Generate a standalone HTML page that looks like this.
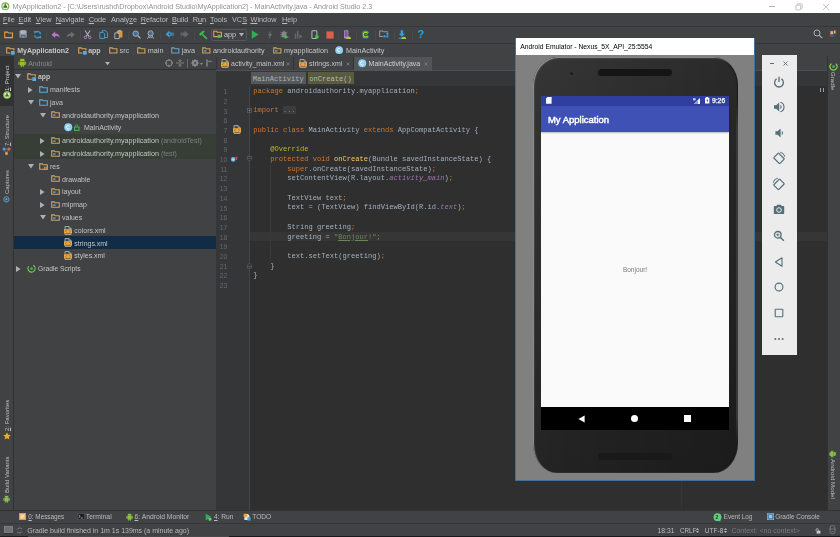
<!DOCTYPE html>
<html><head><meta charset="utf-8"><title>Android Studio</title>
<style>
*{box-sizing:border-box;margin:0;padding:0}
html,body{width:840px;height:537px;overflow:hidden}
body{position:relative;background:#404244;font-family:"Liberation Sans",sans-serif;font-size:7.2px;color:#bbbbbb;line-height:1}
.a{position:absolute}
.t{position:absolute;white-space:pre;line-height:10px;height:10px;filter:blur(.3px)}
svg{filter:blur(.25px);overflow:visible}
u{text-decoration:underline;text-underline-offset:0.5px;text-decoration-thickness:.6px}
.code{font-family:"Liberation Mono",monospace;font-size:7.09px;color:#a3b1c0}
.k{color:#cc7832}.s{color:#6a8759}.an{color:#bbb529}.m{color:#ffc66d}.f{color:#9876aa}.ln{color:#606366}
</style></head><body>
<div class="a" style="left:0px;top:0px;width:840px;height:13px;background:#fff;"></div>
<div class="a" style="left:0px;top:13px;width:840px;height:13px;background:#404244;"></div>
<div class="a" style="left:0px;top:26px;width:840px;height:17px;background:#404244;border-top:1px solid #35383a"></div>
<div class="a" style="left:0px;top:43px;width:840px;height:13px;background:#404244;border-top:1px solid #35383a"></div>
<div class="a" style="left:0px;top:56px;width:13.5px;height:454px;background:#404244;border-right:1px solid #2f3133"></div>
<div class="a" style="left:13.5px;top:56px;width:202.5px;height:454px;background:#404244;"></div>
<div class="a" style="left:216px;top:56px;width:610.5px;height:454px;background:#2f2f2f;"></div>
<div class="a" style="left:826.5px;top:56px;width:13.5px;height:454px;background:#404244;border-left:1px solid #2f3133"></div>
<div class="a" style="left:0px;top:509.7px;width:840px;height:14px;background:#404244;border-top:1px solid #2f3133"></div>
<div class="a" style="left:0px;top:523.4px;width:840px;height:13.6px;background:#404244;border-top:1px solid #35383a"></div>
<svg class="a" style="left:1.30px;top:1.90px" width="8.60" height="8.60" viewBox="0 0 10 10"><circle cx="5" cy="5" r="4.6" fill="#7cb342"/><circle cx="5" cy="5" r="3.3" fill="#e8f0e0"/><path d="M2.6 6.6a2.4 2.4 0 0 1 4.8 0z" fill="#3d6b28"/><path d="M4.6 1.8h.8L6 4.6H4z" fill="#3d6b28"/></svg>
<div class="t" style="left:12.5px;top:1.5px;font-size:7.18px;color:#929292;">MyApplication2 - [C:\Users\rushd\Dropbox\Android Studio\MyApplication2] - MainActivity.java - Android Studio 2.3</div>
<div class="a" style="left:768.5px;top:6px;width:6px;height:0.9px;background:#b4b4b4;"></div>
<svg class="a" style="left:794.50px;top:3.00px" width="8" height="8" viewBox="0 0 8 8"><g fill="none" stroke="#b4b4b4" stroke-width=".8"><rect x=".9" y="2.1" width="4.8" height="4.8" rx=".6"/><path d="M2.3 2V1.3a.5.5 0 0 1 .5-.5H6.6a.5.5 0 0 1 .5.5V5a.5.5 0 0 1-.5.5H5.9"/></g></svg>
<svg class="a" style="left:822.00px;top:2.60px" width="8" height="8" viewBox="0 0 8 8"><path d="M1 .9l6 6M7 .9L1 6.9" stroke="#b4b4b4" stroke-width=".8"/></svg>
<div class="t" style="left:3px;top:14.7px;font-size:7.3px;color:#bcbcbc;"><u>F</u>ile</div>
<div class="t" style="left:18.5px;top:14.7px;font-size:7.3px;color:#bcbcbc;"><u>E</u>dit</div>
<div class="t" style="left:35.8px;top:14.7px;font-size:7.3px;color:#bcbcbc;"><u>V</u>iew</div>
<div class="t" style="left:55.8px;top:14.7px;font-size:7.3px;color:#bcbcbc;"><u>N</u>avigate</div>
<div class="t" style="left:88.7px;top:14.7px;font-size:7.3px;color:#bcbcbc;"><u>C</u>ode</div>
<div class="t" style="left:111px;top:14.7px;font-size:7.3px;color:#bcbcbc;">Analy<u>z</u>e</div>
<div class="t" style="left:140.7px;top:14.7px;font-size:7.3px;color:#bcbcbc;"><u>R</u>efactor</div>
<div class="t" style="left:172px;top:14.7px;font-size:7.3px;color:#bcbcbc;"><u>B</u>uild</div>
<div class="t" style="left:192.7px;top:14.7px;font-size:7.3px;color:#bcbcbc;">R<u>u</u>n</div>
<div class="t" style="left:210px;top:14.7px;font-size:7.3px;color:#bcbcbc;"><u>T</u>ools</div>
<div class="t" style="left:232px;top:14.7px;font-size:7.3px;color:#bcbcbc;">VC<u>S</u></div>
<div class="t" style="left:250.5px;top:14.7px;font-size:7.3px;color:#bcbcbc;"><u>W</u>indow</div>
<div class="t" style="left:282px;top:14.7px;font-size:7.3px;color:#bcbcbc;"><u>H</u>elp</div>
<svg class="a" style="left:3.90px;top:30.82px" width="9.20" height="7.36" viewBox="0 0 10 8"><path d="M.8 1.2h3.2l.8 1h4.4v5H.8z" fill="none" stroke="#e0a24c" stroke-width="1.2"/></svg>
<svg class="a" style="left:18.86px;top:30.36px" width="8.28" height="8.28" viewBox="0 0 9 9"><rect x=".5" y=".5" width="8" height="8" rx=".8" fill="#8f959a"/><rect x="2" y=".5" width="5" height="3.2" fill="#d4d7d9"/><path d="M2.6 1.5h3.8M2.6 2.6h3.8" stroke="#777c80" stroke-width=".5"/><rect x="2" y="5.4" width="5" height="3.1" fill="#5b6064"/><rect x="3" y="6.4" width="3" height="2.1" fill="#4f9fe0"/></svg>
<svg class="a" style="left:32.90px;top:29.90px" width="9.20" height="9.20" viewBox="0 0 10 10"><g fill="none" stroke="#3e9ad6" stroke-width="1.5"><path d="M8.3 4.2A3.4 3.4 0 0 0 2.6 2.6"/><path d="M1.7 5.8A3.4 3.4 0 0 0 7.4 7.4"/></g><path d="M1 1l3.2.4L1.6 4.2z M9 9L5.8 8.6 8.4 5.8z" fill="#3e9ad6"/></svg>
<div class="a" style="left:46px;top:30.5px;width:1px;height:9px;background:#484b4d;"></div>
<svg class="a" style="left:51.40px;top:30.82px" width="9.20" height="7.36" viewBox="0 0 10 8"><path d="M.5 4.2L4.6.6v2.1c3 0 4.6 1.6 4.9 4.6C8.3 5.8 6.8 5.4 4.6 5.5v2.2z" fill="#bb72d4"/></svg>
<svg class="a" style="left:66.40px;top:30.82px" width="9.20" height="7.36" viewBox="0 0 10 8"><path d="M9.5 4.2L5.4.6v2.1c-3 0-4.6 1.6-4.9 4.6C1.7 5.8 3.2 5.4 5.4 5.5v2.2z" fill="#6b6e70"/></svg>
<div class="a" style="left:80px;top:30.5px;width:1px;height:9px;background:#484b4d;"></div>
<svg class="a" style="left:83.40px;top:29.90px" width="9.20" height="9.20" viewBox="0 0 10 10"><path d="M2.2.6L6.6 7M7.8.6L3.4 7" stroke="#b4b8bb" stroke-width="1.1" fill="none"/><circle cx="2.6" cy="8" r="1.4" fill="none" stroke="#b77fd0" stroke-width="1"/><circle cx="7.4" cy="8" r="1.4" fill="none" stroke="#b77fd0" stroke-width="1"/></svg>
<svg class="a" style="left:99.40px;top:29.90px" width="9.20" height="9.20" viewBox="0 0 10 10"><path d="M3.6.8h3.6l2 2v5.4H3.6z" fill="#404244" stroke="#4a9fd8" stroke-width="1"/><path d="M.9 2.6h3.6l1.6 1.6v5H.9z" fill="#404244" stroke="#4a9fd8" stroke-width="1"/></svg>
<svg class="a" style="left:114.40px;top:29.90px" width="9.20" height="9.20" viewBox="0 0 10 10"><rect x="3" y=".8" width="6.2" height="7.4" fill="#d9973f"/><rect x="4.6" y=".2" width="3" height="1.6" fill="#b4b8bb"/><path d="M.9 3.2h3.4l1.4 1.4v4.8H.9z" fill="#404244" stroke="#b4b8bb" stroke-width="1"/></svg>
<div class="a" style="left:127.5px;top:30.5px;width:1px;height:9px;background:#484b4d;"></div>
<svg class="a" style="left:132.40px;top:29.90px" width="9.20" height="9.20" viewBox="0 0 10 10"><circle cx="4" cy="4" r="2.9" fill="#3f6f96" stroke="#aeb3b7" stroke-width="1"/><path d="M6.3 6.3L9.2 9.2" stroke="#aeb3b7" stroke-width="1.3"/></svg>
<svg class="a" style="left:146.40px;top:29.90px" width="9.20" height="9.20" viewBox="0 0 10 10"><circle cx="5" cy="3.6" r="2.8" fill="#3f6f96" stroke="#aeb3b7" stroke-width="1"/><path d="M3.6 6L1.6 9.4M6.4 6L8.4 9.4M3 8h4" stroke="#aeb3b7" stroke-width="1" fill="none"/></svg>
<div class="a" style="left:160px;top:30.5px;width:1px;height:9px;background:#484b4d;"></div>
<svg class="a" style="left:165.40px;top:30.36px" width="9.20" height="8.28" viewBox="0 0 10 9"><path d="M.6 4.5L5 .6v2.2h2.4v3.4H5v2.2z" fill="#3e9ad6"/><rect x="8" y="2.8" width="1.3" height="3.4" fill="#3e9ad6"/><circle cx="5" cy="4.5" r="1" fill="#404244"/></svg>
<svg class="a" style="left:180.40px;top:30.36px" width="9.20" height="8.28" viewBox="0 0 10 9"><path d="M9.4 4.5L5 .6v2.2H2.6v3.4H5v2.2z" fill="#66696b"/><rect x=".7" y="2.8" width="1.3" height="3.4" fill="#66696b"/></svg>
<div class="a" style="left:193.5px;top:30.5px;width:1px;height:9px;background:#484b4d;"></div>
<svg class="a" style="left:198.11px;top:29.60px" width="10.78" height="9.80" viewBox="0 0 11 10"><path d="M1 4.2L5.2.6l2 1.2L4.8 3.6 9.8 8.4 8.6 9.6 3.6 4.8 2.2 5.8z" fill="#3fb54f"/></svg>
<div class="a" style="left:211px;top:29px;width:35.5px;height:11.5px;background:#404244;border:1px solid #54575a;border-radius:1.5px"></div>
<svg class="a" style="left:212.90px;top:30.36px" width="9.20" height="8.28" viewBox="0 0 10 9"><path d="M.8 1.4h3l.8 1h4.6v4.8H.8z" fill="none" stroke="#e0a24c" stroke-width="1.2"/><circle cx="6.6" cy="6.8" r="1.9" fill="#55c04a"/></svg>
<div class="t" style="left:224px;top:29.7px;font-size:7.3px;color:#c8c8c8;">app</div>
<svg class="a" style="left:238.70px;top:33.30px" width="5" height="3.4" viewBox="0 0 5 3.4"><path d="M0 0h5L2.5 3.4z" fill="#b0b3b5"/></svg>
<svg class="a" style="left:251.06px;top:29.90px" width="8.28" height="9.20" viewBox="0 0 9 10"><path d="M.8.4L8.4 5 .8 9.6z" fill="#2fae55"/></svg>
<svg class="a" style="left:266.50px;top:29.50px" width="6.00" height="10.00" viewBox="0 0 6 10"><path d="M3.8.4L.8 5.4h1.8L1.8 9.6 5.2 4h-1.8z" fill="#6b6e70"/></svg>
<svg class="a" style="left:279.90px;top:29.90px" width="9.20" height="9.20" viewBox="0 0 10 10"><ellipse cx="4.4" cy="5" rx="2.7" ry="3.4" fill="#84888b"/><path d="M.6 2.4l2 1.2M.4 5h2M.6 7.6l2-1.2M8.2 2.4l-2 1.2M3 .6l.8 1.4M5.8.6L5 2" stroke="#84888b" stroke-width=".8"/><path d="M5.4 5.4L9.6 7.6 5.4 9.8z" fill="#3fbf4f"/></svg>
<svg class="a" style="left:294.40px;top:29.90px" width="9.20" height="9.20" viewBox="0 0 10 10"><rect x=".8" y="4" width="1.6" height="5.4" fill="#66696b"/><rect x="3.2" y="1" width="1.6" height="8.4" fill="#66696b"/><path d="M5.8 4.6L9.4 7 5.8 9.4z" fill="#66696b"/></svg>
<svg class="a" style="left:310.86px;top:29.90px" width="8.28" height="9.20" viewBox="0 0 9 10"><rect x="1" y=".7" width="5.4" height="8.6" rx=".8" fill="none" stroke="#b4b8bb" stroke-width="1.1"/><circle cx="6.4" cy="7.4" r="2.1" fill="#3fbf4f"/></svg>
<svg class="a" style="left:325.50px;top:30.60px" width="8.00" height="8.00" viewBox="0 0 8 8"><rect x=".4" y=".4" width="7.2" height="7.2" fill="#dc5f50"/></svg>
<div class="a" style="left:337.5px;top:30.5px;width:1px;height:9px;background:#484b4d;"></div>
<svg class="a" style="left:343.16px;top:29.90px" width="8.28" height="9.20" viewBox="0 0 9 10"><rect x="1.2" y=".3" width="4.6" height="9" rx=".5" fill="#b888d6"/><rect x="2" y="1.3" width="3" height="6" fill="#7d5a92"/><path d="M3.4 9.8a2.7 2.6 0 0 1 5.4 0z" fill="#a4cc3f"/></svg>
<div class="a" style="left:355.5px;top:30.5px;width:1px;height:9px;background:#484b4d;"></div>
<svg class="a" style="left:360.90px;top:29.90px" width="9.20" height="9.20" viewBox="0 0 10 10"><path d="M7.2 3.6A2.6 2.6 0 1 0 7.2 6.4" fill="none" stroke="#b5cc3a" stroke-width="1.5"/><path d="M1.6 3A4.1 4.1 0 0 1 8.4 3M8.4 7A4.1 4.1 0 0 1 1.6 7" fill="none" stroke="#2fb0c8" stroke-width="1.1"/><path d="M4 5h3" stroke="#3fbf4f" stroke-width=".9"/></svg>
<div class="a" style="left:374.5px;top:30.5px;width:1px;height:9px;background:#484b4d;"></div>
<svg class="a" style="left:379.44px;top:30.36px" width="10.12" height="8.28" viewBox="0 0 11 9"><path d="M.8 1h3l.8 1h4.6v5H.8z" fill="none" stroke="#94989b" stroke-width="1.1"/><rect x="4.6" y="5.6" width="2.6" height="2.6" fill="#35a5e5" stroke="#404244" stroke-width=".4"/><rect x="7.8" y="5.6" width="2.6" height="2.6" fill="#35a5e5" stroke="#404244" stroke-width=".4"/><rect x="7.8" y="2.6" width="2.6" height="2.6" fill="#35a5e5" stroke="#404244" stroke-width=".4"/></svg>
<div class="a" style="left:393.5px;top:30.5px;width:1px;height:9px;background:#484b4d;"></div>
<svg class="a" style="left:398.36px;top:29.90px" width="8.28" height="9.20" viewBox="0 0 9 10"><path d="M2.8.2h2.8v3.8h2L4.2 7.4.8 4h2z" fill="#2f9fe0"/><path d="M.6 9h3" stroke="#2f9fe0" stroke-width="1"/><path d="M3.4 9.9a2.8 2.5 0 0 1 5.6 0z" fill="#a4cc3f"/></svg>
<div class="a" style="left:411.5px;top:30.5px;width:1px;height:9px;background:#484b4d;"></div>
<div class="t" style="left:417.2px;top:28.2px;font-size:11.4px;color:#2a9de2;font-weight:bold;line-height:12px;height:12px">?</div>
<svg class="a" style="left:813.00px;top:29.00px" width="10" height="10" viewBox="0 0 10 10"><circle cx="4" cy="4" r="3" fill="none" stroke="#aeb1b3" stroke-width=".95"/><path d="M6.2 6.2L9.2 9.2" stroke="#aeb1b3" stroke-width="1.2"/></svg>
<svg class="a" style="left:829.20px;top:30.20px" width="7" height="7" viewBox="0 0 7 7"><rect width="7" height="7" fill="#6b3a2c"/><rect x="1.5" y="1.2" width="2.6" height="4" fill="#c9b8c0"/><rect x="2" y="4" width="2" height="3" fill="#3b5fb0"/><rect x="5" y=".5" width="1.5" height="3" fill="#d8c27a"/></svg>
<svg class="a" style="left:6.10px;top:46.56px" width="8.60" height="6.88" viewBox="0 0 10 8"><path d="M.8 1h3l.8 1h4.6v5H.8z" fill="none" stroke="#d2a45c" stroke-width="1.25"/><rect x="5.3" y="4.1" width="5" height="5" fill="#404244"/><rect x="5.9" y="4.7" width="4.2" height="4.2" fill="#5fabe4"/></svg>
<div class="t" style="left:17.2px;top:45.6px;font-size:7.0px;color:#c8c8c8;font-weight:bold;">MyApplication2</div>
<svg class="a" style="left:70.50px;top:43.50px" width="4" height="13" viewBox="0 0 4 13"><path d="M.5 0L3.5 6.5.5 13" fill="none" stroke="#46494b" stroke-width=".8"/></svg>
<svg class="a" style="left:78.10px;top:46.56px" width="8.60" height="6.88" viewBox="0 0 10 8"><path d="M.8 1h3l.8 1h4.6v5H.8z" fill="none" stroke="#d2a45c" stroke-width="1.25"/><rect x="5.3" y="4.1" width="5" height="5" fill="#404244"/><rect x="5.9" y="4.7" width="4.2" height="4.2" fill="#5fabe4"/></svg>
<div class="t" style="left:88.2px;top:45.6px;font-size:7.0px;color:#c8c8c8;font-weight:bold;">app</div>
<svg class="a" style="left:102.00px;top:43.50px" width="4" height="13" viewBox="0 0 4 13"><path d="M.5 0L3.5 6.5.5 13" fill="none" stroke="#46494b" stroke-width=".8"/></svg>
<svg class="a" style="left:108.50px;top:46.56px" width="8.60" height="6.88" viewBox="0 0 10 8"><path d="M.8 1h3l.8 1h4.6v5H.8z" fill="none" stroke="#d2a45c" stroke-width="1.25"/></svg>
<div class="t" style="left:119.6px;top:45.6px;font-size:7.2px;color:#c8c8c8;">src</div>
<svg class="a" style="left:130.50px;top:43.50px" width="4" height="13" viewBox="0 0 4 13"><path d="M.5 0L3.5 6.5.5 13" fill="none" stroke="#46494b" stroke-width=".8"/></svg>
<svg class="a" style="left:136.70px;top:46.56px" width="8.60" height="6.88" viewBox="0 0 10 8"><path d="M.8 1h3l.8 1h4.6v5H.8z" fill="none" stroke="#d2a45c" stroke-width="1.25"/></svg>
<div class="t" style="left:147.8px;top:45.6px;font-size:7.2px;color:#c8c8c8;">main</div>
<svg class="a" style="left:164.50px;top:43.50px" width="4" height="13" viewBox="0 0 4 13"><path d="M.5 0L3.5 6.5.5 13" fill="none" stroke="#46494b" stroke-width=".8"/></svg>
<svg class="a" style="left:170.50px;top:46.56px" width="8.60" height="6.88" viewBox="0 0 10 8"><path d="M.8 1h3l.8 1h4.6v5H.8z" fill="none" stroke="#5fa8d8" stroke-width="1.25"/></svg>
<div class="t" style="left:181.7px;top:45.6px;font-size:7.2px;color:#c8c8c8;">java</div>
<svg class="a" style="left:196.00px;top:43.50px" width="4" height="13" viewBox="0 0 4 13"><path d="M.5 0L3.5 6.5.5 13" fill="none" stroke="#46494b" stroke-width=".8"/></svg>
<svg class="a" style="left:201.70px;top:46.56px" width="8.60" height="6.88" viewBox="0 0 10 8"><path d="M.8 1h3l.8 1h4.6v5H.8z" fill="none" stroke="#d2a45c" stroke-width="1.25"/><rect x="2.4" y="3.6" width="2.6" height="1.9" fill="#4a9fd8"/></svg>
<div class="t" style="left:213px;top:45.6px;font-size:7.2px;color:#c8c8c8;">androidauthority</div>
<svg class="a" style="left:266.00px;top:43.50px" width="4" height="13" viewBox="0 0 4 13"><path d="M.5 0L3.5 6.5.5 13" fill="none" stroke="#46494b" stroke-width=".8"/></svg>
<svg class="a" style="left:272.90px;top:46.56px" width="8.60" height="6.88" viewBox="0 0 10 8"><path d="M.8 1h3l.8 1h4.6v5H.8z" fill="none" stroke="#d2a45c" stroke-width="1.25"/><rect x="2.4" y="3.6" width="2.6" height="1.9" fill="#4a9fd8"/></svg>
<div class="t" style="left:284px;top:45.6px;font-size:7.2px;color:#c8c8c8;">myapplication</div>
<svg class="a" style="left:328.50px;top:43.50px" width="4" height="13" viewBox="0 0 4 13"><path d="M.5 0L3.5 6.5.5 13" fill="none" stroke="#46494b" stroke-width=".8"/></svg>
<svg class="a" style="left:335.16px;top:45.86px" width="8.28" height="8.28" viewBox="0 0 9 9"><circle cx="4.5" cy="4.5" r="4.2" fill="#8fd0f5"/><path d="M5.9 3.3A1.9 1.9 0 1 0 5.9 5.7" fill="none" stroke="#fff" stroke-width=".9"/></svg>
<div class="t" style="left:346px;top:45.6px;font-size:7.2px;color:#c8c8c8;">MainActivity</div>
<svg class="a" style="left:385.00px;top:43.50px" width="4" height="13" viewBox="0 0 4 13"><path d="M.5 0L3.5 6.5.5 13" fill="none" stroke="#46494b" stroke-width=".8"/></svg>
<div class="a" style="left:0px;top:56px;width:13px;height:50px;background:#303234;"></div>
<div class="t" style="left:1.60px;top:91.00px;font-size:6.0px;color:#c8c8c8;transform-origin:0 0;transform:rotate(-90deg)"><u>1</u>: Project</div>
<svg class="a" style="left:2.60px;top:91.30px" width="8" height="8" viewBox="0 0 8 8"><circle cx="4" cy="4" r="3.8" fill="#9ccc4a"/><circle cx="4" cy="4" r="2.6" fill="#e4eedc"/><path d="M2 5.4a2 2 0 0 1 4 0z M3.6 1.6h.8l.4 2.2H3.2z" fill="#3d6b28"/></svg>
<div class="t" style="left:1.60px;top:146.40px;font-size:6.0px;color:#bbbbbb;transform-origin:0 0;transform:rotate(-90deg)"><u>7</u>: Structure</div>
<svg class="a" style="left:2.10px;top:146.80px" width="9" height="8" viewBox="0 0 9 8"><path d="M2 2l2.5 4.6L7 2z" fill="none" stroke="#9a9da0" stroke-width=".6"/><circle cx="2" cy="2" r="1.5" fill="#4a9fd8"/><circle cx="7" cy="2" r="1.5" fill="#e0605a"/><circle cx="4.5" cy="6.4" r="1.5" fill="#e0a24c"/></svg>
<div class="t" style="left:1.60px;top:193.80px;font-size:5.9px;color:#bbbbbb;transform-origin:0 0;transform:rotate(-90deg)">Captures</div>
<svg class="a" style="left:3.20px;top:196.40px" width="6.80" height="6.80" viewBox="0 0 8 8"><circle cx="4" cy="4" r="3" fill="none" stroke="#5f95c2" stroke-width="1.2"/><circle cx="4" cy="4" r="1.3" fill="#8a9aa8"/></svg>
<div class="t" style="left:1.60px;top:431.00px;font-size:6.0px;color:#bbbbbb;transform-origin:0 0;transform:rotate(-90deg)"><u>2</u>: Favorites</div>
<svg class="a" style="left:2.60px;top:432.00px" width="8" height="8" viewBox="0 0 8 8"><path d="M4 .3l1.1 2.5 2.7.3-2 1.8.6 2.7L4 6.2 1.6 7.6l.6-2.7-2-1.8 2.7-.3z" fill="#f0a732"/></svg>
<div class="t" style="left:1.60px;top:493.00px;font-size:6.0px;color:#bbbbbb;transform-origin:0 0;transform:rotate(-90deg)">Build Variants</div>
<svg class="a" style="left:3.00px;top:494.50px" width="7.20" height="8.00" viewBox="0 0 9 10"><g transform="rotate(0 4.5 5)"><path d="M1.8 3.4a2.7 2.6 0 0 1 5.4 0z M1.8 3.9h5.4v3.6a.5.5 0 0 1-.5.5H2.3a.5.5 0 0 1-.5-.5z M3 8h1v1.6H3z M5 8h1v1.6H5z M.4 4h1v3H.4z M7.6 4h1v3h-1z" fill="#8bc34a"/><path d="M2.6.4l.8 1.2M6.4.4l-.8 1.2" stroke="#8bc34a" stroke-width=".5"/></g></svg>
<div class="a" style="left:13.5px;top:56px;width:202.5px;height:13.8px;background:#404244;border-bottom:1px solid #2e3031"></div>
<svg class="a" style="left:17.53px;top:58.35px" width="8.55" height="9.50" viewBox="0 0 9 10"><g transform="rotate(0 4.5 5)"><path d="M1.8 3.4a2.7 2.6 0 0 1 5.4 0z M1.8 3.9h5.4v3.6a.5.5 0 0 1-.5.5H2.3a.5.5 0 0 1-.5-.5z M3 8h1v1.6H3z M5 8h1v1.6H5z M.4 4h1v3H.4z M7.6 4h1v3h-1z" fill="#97c024"/><path d="M2.6.4l.8 1.2M6.4.4l-.8 1.2" stroke="#97c024" stroke-width=".5"/></g></svg>
<div class="t" style="left:28.2px;top:58.6px;font-size:6.9px;color:#888b8d;">Android</div>
<svg class="a" style="left:104.50px;top:61.80px" width="5" height="3.2" viewBox="0 0 5 3.2"><path d="M0 0h5L2.5 3.2z" fill="#b0b3b5"/></svg>
<svg class="a" style="left:165.40px;top:59.10px" width="8" height="8" viewBox="0 0 8 8"><circle cx="4" cy="4" r="3.2" fill="none" stroke="#8c8f91" stroke-width="1"/><path d="M4 0v2.4M4 5.6V8M0 4h2.4M5.6 4H8" stroke="#8c8f91" stroke-width=".9"/></svg>
<svg class="a" style="left:176.40px;top:59.10px" width="8" height="8" viewBox="0 0 8 8"><path d="M0 4h8M4 0v2.6M4 8V5.4M2.6 1.2L4 2.8 5.4 1.2M2.6 6.8L4 5.2 5.4 6.8" stroke="#8c8f91" stroke-width=".8" fill="none"/></svg>
<div class="a" style="left:187.4px;top:58.5px;width:0.9px;height:9.5px;background:#6a6d6f;"></div>
<svg class="a" style="left:190.50px;top:59.10px" width="8" height="8" viewBox="0 0 8 8"><circle cx="4" cy="4" r="2.3" fill="none" stroke="#8c8f91" stroke-width="1.5"/><path d="M4 0v8M0 4h8M1.2 1.2l5.6 5.6M6.8 1.2L1.2 6.8" stroke="#8c8f91" stroke-width="1"/><circle cx="4" cy="4" r="1" fill="#404244"/></svg>
<svg class="a" style="left:199.50px;top:62.80px" width="3" height="2" viewBox="0 0 3 2"><path d="M0 0h3L1.5 2z" fill="#8c8f91"/></svg>
<svg class="a" style="left:206.00px;top:59.10px" width="7" height="8" viewBox="0 0 7 8"><path d="M1 .6v6.8" stroke="#8c8f91" stroke-width="1.3"/><path d="M2.6 2.4h3.6M2.6 2.4l1-1M2.6 2.4l1 1" stroke="#8c8f91" stroke-width=".7" fill="none"/></svg>
<div class="a" style="left:13.5px;top:133.8px;width:202.5px;height:25.5px;background:#363e36;"></div>
<div class="a" style="left:13.5px;top:236.4px;width:202.5px;height:12.5px;background:#112d46;"></div>
<svg class="a" style="left:15.00px;top:74.40px" width="6" height="4.6" viewBox="0 0 6 4.6"><path d="M0 0h6L3 4.6z" fill="#adb0b2"/></svg>
<svg class="a" style="left:27.00px;top:72.90px" width="9.00" height="7.20" viewBox="0 0 10 8"><path d="M.8 1h3l.8 1h4.6v5H.8z" fill="none" stroke="#d2a45c" stroke-width="1.25"/><rect x="5.3" y="4.1" width="5" height="5" fill="#404244"/><rect x="5.9" y="4.7" width="4.2" height="4.2" fill="#5fabe4"/></svg>
<div class="t" style="left:38px;top:72.10px;font-size:6.8px;color:#c4c4c4;font-weight:bold;">app</div>
<svg class="a" style="left:28.20px;top:86.50px" width="4.6" height="6" viewBox="0 0 4.6 6"><path d="M0 0v6L4.6 3z" fill="#adb0b2"/></svg>
<svg class="a" style="left:39.00px;top:85.70px" width="9.00" height="7.20" viewBox="0 0 10 8"><path d="M.8 1h3l.8 1h4.6v5H.8z" fill="none" stroke="#5fa8d8" stroke-width="1.25"/></svg>
<div class="t" style="left:50px;top:84.90px;font-size:7.0px;color:#c4c4c4;">manifests</div>
<svg class="a" style="left:27.50px;top:100.00px" width="6" height="4.6" viewBox="0 0 6 4.6"><path d="M0 0h6L3 4.6z" fill="#adb0b2"/></svg>
<svg class="a" style="left:39.00px;top:98.50px" width="9.00" height="7.20" viewBox="0 0 10 8"><path d="M.8 1h3l.8 1h4.6v5H.8z" fill="none" stroke="#5fa8d8" stroke-width="1.25"/></svg>
<div class="t" style="left:50px;top:97.70px;font-size:7.0px;color:#c4c4c4;">java</div>
<svg class="a" style="left:39.50px;top:112.80px" width="6" height="4.6" viewBox="0 0 6 4.6"><path d="M0 0h6L3 4.6z" fill="#adb0b2"/></svg>
<svg class="a" style="left:51.00px;top:111.30px" width="9.00" height="7.20" viewBox="0 0 10 8"><path d="M.8 1h3l.8 1h4.6v5H.8z" fill="none" stroke="#d2a45c" stroke-width="1.25"/><rect x="2.4" y="3.6" width="2.6" height="1.9" fill="#4a9fd8"/></svg>
<div class="t" style="left:62px;top:110.50px;font-size:7.0px;color:#c4c4c4;"><span style="font-size:7.2px">androidauthority.myapplication</span></div>
<svg class="a" style="left:63.73px;top:123.42px" width="8.55" height="8.55" viewBox="0 0 9 9"><circle cx="4.5" cy="4.5" r="4.2" fill="#8fd0f5"/><path d="M5.9 3.3A1.9 1.9 0 1 0 5.9 5.7" fill="none" stroke="#fff" stroke-width=".9"/></svg>
<svg class="a" style="left:73.50px;top:123.50px" width="6" height="7" viewBox="0 0 6 7"><rect x=".6" y="3" width="4.4" height="3.4" fill="none" stroke="#4caf50" stroke-width="1.1"/><path d="M1.6 3V1.8a1.2 1.2 0 0 1 2.4 0" fill="none" stroke="#4caf50" stroke-width=".8"/></svg>
<div class="t" style="left:84px;top:123.30px;font-size:7.0px;color:#c4c4c4;">MainActivity</div>
<svg class="a" style="left:40.20px;top:137.70px" width="4.6" height="6" viewBox="0 0 4.6 6"><path d="M0 0v6L4.6 3z" fill="#adb0b2"/></svg>
<svg class="a" style="left:51.00px;top:136.90px" width="9.00" height="7.20" viewBox="0 0 10 8"><path d="M.8 1h3l.8 1h4.6v5H.8z" fill="none" stroke="#d2a45c" stroke-width="1.25"/><rect x="2.4" y="3.6" width="2.6" height="1.9" fill="#4a9fd8"/></svg>
<div class="t" style="left:62px;top:136.10px;font-size:7.0px;color:#c4c4c4;"><span style="font-size:7.2px">androidauthority.myapplication</span><span style="color:#7e8183"> (androidTest)</span></div>
<svg class="a" style="left:40.20px;top:150.50px" width="4.6" height="6" viewBox="0 0 4.6 6"><path d="M0 0v6L4.6 3z" fill="#adb0b2"/></svg>
<svg class="a" style="left:51.00px;top:149.70px" width="9.00" height="7.20" viewBox="0 0 10 8"><path d="M.8 1h3l.8 1h4.6v5H.8z" fill="none" stroke="#d2a45c" stroke-width="1.25"/><rect x="2.4" y="3.6" width="2.6" height="1.9" fill="#4a9fd8"/></svg>
<div class="t" style="left:62px;top:148.90px;font-size:7.0px;color:#c4c4c4;"><span style="font-size:7.2px">androidauthority.myapplication</span><span style="color:#7e8183"> (test)</span></div>
<svg class="a" style="left:27.50px;top:164.00px" width="6" height="4.6" viewBox="0 0 6 4.6"><path d="M0 0h6L3 4.6z" fill="#adb0b2"/></svg>
<svg class="a" style="left:39.00px;top:162.50px" width="9.00" height="7.20" viewBox="0 0 10 8"><path d="M.8 1h3l.8 1h4.6v5H.8z" fill="none" stroke="#d2a45c" stroke-width="1.25"/><path d="M5.4 4.2h3.8v3.6H5.4z" fill="#dca148"/><path d="M6.2 5.2h2.2M6.2 6.4h2.2" stroke="#404244" stroke-width=".6"/></svg>
<div class="t" style="left:50px;top:161.70px;font-size:7.0px;color:#c4c4c4;">res</div>
<svg class="a" style="left:51.00px;top:175.30px" width="9.00" height="7.20" viewBox="0 0 10 8"><path d="M.8 1h3l.8 1h4.6v5H.8z" fill="none" stroke="#d2a45c" stroke-width="1.25"/><rect x="2.4" y="3.6" width="2.6" height="1.9" fill="#4a9fd8"/></svg>
<div class="t" style="left:62px;top:174.50px;font-size:7.0px;color:#c4c4c4;">drawable</div>
<svg class="a" style="left:40.20px;top:188.90px" width="4.6" height="6" viewBox="0 0 4.6 6"><path d="M0 0v6L4.6 3z" fill="#adb0b2"/></svg>
<svg class="a" style="left:51.00px;top:188.10px" width="9.00" height="7.20" viewBox="0 0 10 8"><path d="M.8 1h3l.8 1h4.6v5H.8z" fill="none" stroke="#d2a45c" stroke-width="1.25"/><rect x="2.4" y="3.6" width="2.6" height="1.9" fill="#4a9fd8"/></svg>
<div class="t" style="left:62px;top:187.30px;font-size:7.0px;color:#c4c4c4;">layout</div>
<svg class="a" style="left:40.20px;top:201.70px" width="4.6" height="6" viewBox="0 0 4.6 6"><path d="M0 0v6L4.6 3z" fill="#adb0b2"/></svg>
<svg class="a" style="left:51.00px;top:200.90px" width="9.00" height="7.20" viewBox="0 0 10 8"><path d="M.8 1h3l.8 1h4.6v5H.8z" fill="none" stroke="#d2a45c" stroke-width="1.25"/><rect x="2.4" y="3.6" width="2.6" height="1.9" fill="#4a9fd8"/></svg>
<div class="t" style="left:62px;top:200.10px;font-size:7.0px;color:#c4c4c4;">mipmap</div>
<svg class="a" style="left:39.50px;top:215.20px" width="6" height="4.6" viewBox="0 0 6 4.6"><path d="M0 0h6L3 4.6z" fill="#adb0b2"/></svg>
<svg class="a" style="left:51.00px;top:213.70px" width="9.00" height="7.20" viewBox="0 0 10 8"><path d="M.8 1h3l.8 1h4.6v5H.8z" fill="none" stroke="#d2a45c" stroke-width="1.25"/><rect x="2.4" y="3.6" width="2.6" height="1.9" fill="#4a9fd8"/></svg>
<div class="t" style="left:62px;top:212.90px;font-size:7.0px;color:#c4c4c4;">values</div>
<svg class="a" style="left:63.70px;top:225.60px" width="8" height="9" viewBox="0 0 8 9"><path d="M1 .5h4l2 2v6H1z" fill="#4a4d4f" stroke="#b4b7b9" stroke-width=".8"/><path d="M5 .5v2h2" fill="none" stroke="#b4b7b9" stroke-width=".6"/><rect x="0" y="3.2" width="8" height="4.2" fill="#eca53c"/><path d="M2.6 4.2L1.5 5.3l1.1 1.1M5.4 4.2l1.1 1.1-1.1 1.1" stroke="#7a5a20" stroke-width=".7" fill="none"/></svg>
<div class="t" style="left:74.3px;top:225.70px;font-size:7.0px;color:#c4c4c4;">color<span style="letter-spacing:-.08px">s.xml</span></div>
<svg class="a" style="left:63.70px;top:238.40px" width="8" height="9" viewBox="0 0 8 9"><path d="M1 .5h4l2 2v6H1z" fill="#4a4d4f" stroke="#b4b7b9" stroke-width=".8"/><path d="M5 .5v2h2" fill="none" stroke="#b4b7b9" stroke-width=".6"/><rect x="0" y="3.2" width="8" height="4.2" fill="#eca53c"/><path d="M2.6 4.2L1.5 5.3l1.1 1.1M5.4 4.2l1.1 1.1-1.1 1.1" stroke="#7a5a20" stroke-width=".7" fill="none"/></svg>
<div class="t" style="left:74.3px;top:238.50px;font-size:7.0px;color:#c4c4c4;">string<span style="letter-spacing:-.08px">s.xml</span></div>
<svg class="a" style="left:63.70px;top:251.20px" width="8" height="9" viewBox="0 0 8 9"><path d="M1 .5h4l2 2v6H1z" fill="#4a4d4f" stroke="#b4b7b9" stroke-width=".8"/><path d="M5 .5v2h2" fill="none" stroke="#b4b7b9" stroke-width=".6"/><rect x="0" y="3.2" width="8" height="4.2" fill="#eca53c"/><path d="M2.6 4.2L1.5 5.3l1.1 1.1M5.4 4.2l1.1 1.1-1.1 1.1" stroke="#7a5a20" stroke-width=".7" fill="none"/></svg>
<div class="t" style="left:74.3px;top:251.30px;font-size:7.0px;color:#c4c4c4;">style<span style="letter-spacing:-.08px">s.xml</span></div>
<svg class="a" style="left:15.70px;top:265.70px" width="4.6" height="6" viewBox="0 0 4.6 6"><path d="M0 0v6L4.6 3z" fill="#adb0b2"/></svg>
<svg class="a" style="left:26.80px;top:264.00px" width="9" height="9" viewBox="0 0 9 9"><circle cx="4.5" cy="4.5" r="3.6" fill="none" stroke="#7bc043" stroke-width="1.2" stroke-dasharray="17 5.6" transform="rotate(-60 4.5 4.5)"/><circle cx="4.5" cy="4.5" r="1.5" fill="#2fae55"/></svg>
<div class="t" style="left:38px;top:264.10px;font-size:7.0px;color:#c4c4c4;"><span style="font-size:6.72px">Gradle Scripts</span></div>
<div class="a" style="left:216px;top:56px;width:610.5px;height:15px;background:#404244;border-bottom:1.4px solid #4d5153"></div>
<div class="a" style="left:216px;top:56.5px;width:77.5px;height:13px;background:transparent;border-right:1px solid #323435;border-left:1px solid #323435"></div>
<div class="a" style="left:293.5px;top:56.5px;width:60.5px;height:13px;background:transparent;border-right:1px solid #323435"></div>
<div class="a" style="left:354px;top:56.5px;width:78px;height:14px;background:#515557;"></div>
<svg class="a" style="left:220.80px;top:58.80px" width="8" height="9" viewBox="0 0 8 9"><path d="M1 .5h4l2 2v6H1z" fill="#4a4d4f" stroke="#b4b7b9" stroke-width=".8"/><path d="M5 .5v2h2" fill="none" stroke="#b4b7b9" stroke-width=".6"/><rect x="0" y="3.2" width="8" height="4.2" fill="#eca53c"/><path d="M2.6 4.2L1.5 5.3l1.1 1.1M5.4 4.2l1.1 1.1-1.1 1.1" stroke="#7a5a20" stroke-width=".7" fill="none"/></svg>
<div class="t" style="left:231px;top:59.2px;font-size:7px;color:#c4c4c4;">activity_main.xml</div>
<svg class="a" style="left:286.30px;top:61.80px" width="4" height="4" viewBox="0 0 4 4"><path d="M.4.4l3.2 3.2M3.6.4L.4 3.6" stroke="#7d8082" stroke-width=".8"/></svg>
<svg class="a" style="left:298.70px;top:59.00px" width="8" height="9" viewBox="0 0 8 9"><path d="M1 .5h4l2 2v6H1z" fill="#4a4d4f" stroke="#b4b7b9" stroke-width=".8"/><path d="M5 .5v2h2" fill="none" stroke="#b4b7b9" stroke-width=".6"/><rect x="0" y="3.2" width="8" height="4.2" fill="#eca53c"/><path d="M2.6 4.2L1.5 5.3l1.1 1.1M5.4 4.2l1.1 1.1-1.1 1.1" stroke="#7a5a20" stroke-width=".7" fill="none"/></svg>
<div class="t" style="left:309px;top:59.2px;font-size:7px;color:#c4c4c4;">strings.xml</div>
<svg class="a" style="left:345.80px;top:61.80px" width="4" height="4" viewBox="0 0 4 4"><path d="M.4.4l3.2 3.2M3.6.4L.4 3.6" stroke="#7d8082" stroke-width=".8"/></svg>
<svg class="a" style="left:357.53px;top:59.23px" width="8.55" height="8.55" viewBox="0 0 9 9"><circle cx="4.5" cy="4.5" r="4.2" fill="#8fd0f5"/><path d="M5.9 3.3A1.9 1.9 0 1 0 5.9 5.7" fill="none" stroke="#fff" stroke-width=".9"/></svg>
<div class="t" style="left:368.6px;top:59.2px;font-size:7px;color:#d0d0d0;">MainActivity.java</div>
<svg class="a" style="left:423.60px;top:61.80px" width="4" height="4" viewBox="0 0 4 4"><path d="M.4.4l3.2 3.2M3.6.4L.4 3.6" stroke="#7d8082" stroke-width=".8"/></svg>
<div class="a" style="left:216px;top:70.5px;width:610.5px;height:15px;background:#353638;"></div>
<div class="a code" style="left:251px;top:72.3px;width:54.6px;height:12px;background:#54585a;color:#adb3b9;line-height:14.6px;padding-left:1.8px;white-space:pre;overflow:hidden">MainActivity</div>
<div class="a code" style="left:307.5px;top:72.3px;width:46.5px;height:12px;background:#5a5a42;color:#b8b8a0;line-height:14.6px;padding-left:1.8px;white-space:pre;overflow:hidden">onCreate()</div>
<div class="a" style="left:216px;top:85.5px;width:34px;height:424.5px;background:#353638;border-right:1px solid #444546"></div>
<div class="a" style="left:250px;top:231.6px;width:576.5px;height:9.7px;background:#363636;"></div>
<div class="a" style="left:270px;top:164px;width:1px;height:97px;background:#393939;"></div>
<div class="a" style="left:681px;top:85.5px;width:1px;height:424.5px;background:#353535;"></div>
<div class="t ln" style="left:215px;width:12.4px;text-align:right;top:87.10px;font-size:6.9px;color:#64676a">1</div>
<div class="t code" style="left:253.3px;top:86.00px"><span class="k">package</span> androidauthority.myapplication<span class="k">;</span></div>
<div class="t ln" style="left:215px;width:12.4px;text-align:right;top:96.80px;font-size:6.9px;color:#64676a">2</div>
<div class="t ln" style="left:215px;width:12.4px;text-align:right;top:106.50px;font-size:6.9px;color:#64676a">3</div>
<div class="t code" style="left:253.3px;top:105.40px"><span class="k">import</span> <span style="background:#3a3c3d;color:#8c8c8c">...</span></div>
<div class="t ln" style="left:215px;width:12.4px;text-align:right;top:116.20px;font-size:6.9px;color:#64676a">6</div>
<div class="t ln" style="left:215px;width:12.4px;text-align:right;top:125.90px;font-size:6.9px;color:#64676a">7</div>
<div class="t code" style="left:253.3px;top:124.80px"><span class="k">public class</span> MainActivity <span class="k">extends</span> AppCompatActivity {</div>
<div class="t ln" style="left:215px;width:12.4px;text-align:right;top:135.60px;font-size:6.9px;color:#64676a">8</div>
<div class="t ln" style="left:215px;width:12.4px;text-align:right;top:145.30px;font-size:6.9px;color:#64676a">9</div>
<div class="t code" style="left:253.3px;top:144.20px">    <span class="an">@Override</span></div>
<div class="t ln" style="left:215px;width:12.4px;text-align:right;top:155.00px;font-size:6.9px;color:#64676a">10</div>
<div class="t code" style="left:253.3px;top:153.90px">    <span class="k">protected void</span> <span class="m">onCreate</span>(Bundle savedInstanceState) {</div>
<div class="t ln" style="left:215px;width:12.4px;text-align:right;top:164.70px;font-size:6.9px;color:#64676a">11</div>
<div class="t code" style="left:253.3px;top:163.60px">        <span class="k">super</span>.onCreate(savedInstanceState)<span class="k">;</span></div>
<div class="t ln" style="left:215px;width:12.4px;text-align:right;top:174.40px;font-size:6.9px;color:#64676a">12</div>
<div class="t code" style="left:253.3px;top:173.30px">        setContentView(R.layout.<span class="f" style="font-style:italic">activity_main</span>)<span class="k">;</span></div>
<div class="t ln" style="left:215px;width:12.4px;text-align:right;top:184.10px;font-size:6.9px;color:#64676a">13</div>
<div class="t ln" style="left:215px;width:12.4px;text-align:right;top:193.80px;font-size:6.9px;color:#64676a">14</div>
<div class="t code" style="left:253.3px;top:192.70px">        TextView text<span class="k">;</span></div>
<div class="t ln" style="left:215px;width:12.4px;text-align:right;top:203.50px;font-size:6.9px;color:#64676a">15</div>
<div class="t code" style="left:253.3px;top:202.40px">        text = (TextView) findViewById(R.id.<span class="f" style="font-style:italic">text</span>)<span class="k">;</span></div>
<div class="t ln" style="left:215px;width:12.4px;text-align:right;top:213.20px;font-size:6.9px;color:#64676a">16</div>
<div class="t ln" style="left:215px;width:12.4px;text-align:right;top:222.90px;font-size:6.9px;color:#64676a">17</div>
<div class="t code" style="left:253.3px;top:221.80px">        String greeting<span class="k">;</span></div>
<div class="t ln" style="left:215px;width:12.4px;text-align:right;top:232.60px;font-size:6.9px;color:#64676a">18</div>
<div class="t code" style="left:253.3px;top:231.50px">        greeting = <span class="s">"<span style="text-decoration:underline;text-decoration-color:#6a8759;text-decoration-thickness:.5px">Bonjour</span>!"</span><span class="k">;</span></div>
<div class="t ln" style="left:215px;width:12.4px;text-align:right;top:242.30px;font-size:6.9px;color:#64676a">19</div>
<div class="t ln" style="left:215px;width:12.4px;text-align:right;top:252.00px;font-size:6.9px;color:#64676a">20</div>
<div class="t code" style="left:253.3px;top:250.90px">        text.setText(greeting)<span class="k">;</span></div>
<div class="t ln" style="left:215px;width:12.4px;text-align:right;top:261.70px;font-size:6.9px;color:#64676a">21</div>
<div class="t code" style="left:253.3px;top:260.60px">    }</div>
<div class="t ln" style="left:215px;width:12.4px;text-align:right;top:271.40px;font-size:6.9px;color:#64676a">22</div>
<div class="t code" style="left:253.3px;top:270.30px">}</div>
<div class="t ln" style="left:215px;width:12.4px;text-align:right;top:281.10px;font-size:6.9px;color:#64676a">23</div>
<svg class="a" style="left:233.00px;top:125.30px" width="8" height="9" viewBox="0 0 8 9"><path d="M1 .5h4l2 2v6H1z" fill="#4a4d4f" stroke="#b4b7b9" stroke-width=".8"/><path d="M5 .5v2h2" fill="none" stroke="#b4b7b9" stroke-width=".6"/><rect x="0" y="3.2" width="8" height="4.2" fill="#eca53c"/><path d="M2.6 4.2L1.5 5.3l1.1 1.1M5.4 4.2l1.1 1.1-1.1 1.1" stroke="#7a5a20" stroke-width=".7" fill="none"/></svg>
<svg class="a" style="left:230.30px;top:154.90px" width="8" height="8" viewBox="0 0 8 8"><circle cx="3.2" cy="4.4" r="2.3" fill="#6fb4e6"/><circle cx="3.2" cy="4.4" r="1" fill="#c6e2f6"/><path d="M6.5 5V2M5.6 3L6.5 1.8 7.4 3" stroke="#e05a56" stroke-width=".8" fill="none"/></svg>
<svg class="a" style="left:247.30px;top:107.90px" width="5" height="5" viewBox="0 0 5 5"><rect x=".4" y=".4" width="4.2" height="4.2" fill="#2f2f2f" stroke="#6c6f71" stroke-width=".6"/><path d="M1.3 2.5h2.4M2.5 1.3v2.4" stroke="#8a8d8f" stroke-width=".6"/></svg>
<svg class="a" style="left:247.30px;top:156.15px" width="5" height="5.5" viewBox="0 0 5 5.5"><path d="M.4.4h4.2v3L2.5 5.2.4 3.4z" fill="#2f2f2f" stroke="#6c6f71" stroke-width=".6"/><path d="M1.4 2.2h2.2" stroke="#8a8d8f" stroke-width=".6"/></svg>
<svg class="a" style="left:247.30px;top:262.85px" width="5" height="5.5" viewBox="0 0 5 5.5"><path d="M.4 5.1h4.2v-3L2.5.3.4 2.1z" fill="#2f2f2f" stroke="#6c6f71" stroke-width=".6"/><path d="M1.4 3.3h2.2" stroke="#8a8d8f" stroke-width=".6"/></svg>
<div class="a" style="left:820.3px;top:87.8px;width:1.1px;height:4.2px;background:#9a9da0;"></div>
<div class="a" style="left:822.7px;top:87.8px;width:1.1px;height:4.2px;background:#9a9da0;"></div>
<svg class="a" style="left:828.50px;top:62.10px" width="9" height="9" viewBox="0 0 9 9"><circle cx="4.5" cy="4.5" r="3.5" fill="none" stroke="#8bc34a" stroke-width="1.2" stroke-dasharray="17 5" transform="rotate(-50 4.5 4.5)"/><circle cx="4.5" cy="4.5" r="1.5" fill="#2fae55"/></svg>
<div class="t" style="left:838.00px;top:72.30px;font-size:6.15px;color:#bbbbbb;transform-origin:0 0;transform:rotate(90deg)">Gradle</div>
<svg class="a" style="left:829.20px;top:449.70px" width="7.20" height="8.00" viewBox="0 0 9 10"><g transform="rotate(90 4.5 5)"><path d="M1.8 3.4a2.7 2.6 0 0 1 5.4 0z M1.8 3.9h5.4v3.6a.5.5 0 0 1-.5.5H2.3a.5.5 0 0 1-.5-.5z M3 8h1v1.6H3z M5 8h1v1.6H5z M.4 4h1v3H.4z M7.6 4h1v3h-1z" fill="#8bc34a"/><path d="M2.6.4l.8 1.2M6.4.4l-.8 1.2" stroke="#8bc34a" stroke-width=".5"/></g></svg>
<div class="t" style="left:838.00px;top:459.00px;font-size:6.2px;color:#bbbbbb;transform-origin:0 0;transform:rotate(90deg)">Android Model</div>
<svg class="a" style="left:19.00px;top:513.20px" width="7" height="7" viewBox="0 0 7 7"><rect x=".3" y=".3" width="6.4" height="6.4" fill="#f0c07a" stroke="#d8a55a" stroke-width=".6"/><path d="M1.8 2.2h3.4M1.8 3.5h3.4M1.8 4.8h2.4" stroke="#fff3dc" stroke-width=".6"/></svg>
<div class="t" style="left:28.3px;top:512.4px;font-size:6.35px;color:#bbbbbb;"><u>0</u>: Messages</div>
<svg class="a" style="left:76.80px;top:513.20px" width="8" height="7" viewBox="0 0 8 7"><rect x=".3" y=".3" width="7.4" height="6.4" fill="#1e1e1e" stroke="#5a5d5f" stroke-width=".6"/><path d="M1.6 2l1.6 1.4-1.6 1.4M3.8 5h2" stroke="#e0e0e0" stroke-width=".7" fill="none"/></svg>
<div class="t" style="left:85.8px;top:512.4px;font-size:6.85px;color:#bbbbbb;">Terminal</div>
<svg class="a" style="left:125.70px;top:512.70px" width="7.20" height="8.00" viewBox="0 0 9 10"><g transform="rotate(0 4.5 5)"><path d="M1.8 3.4a2.7 2.6 0 0 1 5.4 0z M1.8 3.9h5.4v3.6a.5.5 0 0 1-.5.5H2.3a.5.5 0 0 1-.5-.5z M3 8h1v1.6H3z M5 8h1v1.6H5z M.4 4h1v3H.4z M7.6 4h1v3h-1z" fill="#8bc34a"/><path d="M2.6.4l.8 1.2M6.4.4l-.8 1.2" stroke="#8bc34a" stroke-width=".5"/></g></svg>
<div class="t" style="left:134.5px;top:512.4px;font-size:6.75px;color:#bbbbbb;"><u>6</u>: Android Monitor</div>
<svg class="a" style="left:204.90px;top:512.70px" width="7" height="8" viewBox="0 0 7 8"><path d="M.6.5L6.4 4 .6 7.5z" fill="#2fae55"/><rect x="3.6" y="5" width="2.8" height="2.6" fill="#7ec97e"/></svg>
<div class="t" style="left:214px;top:512.4px;font-size:6.6px;color:#bbbbbb;"><u>4</u>: Run</div>
<svg class="a" style="left:243.00px;top:512.70px" width="8" height="8" viewBox="0 0 8 8"><path d="M1.4 1h3.4l1.6 1.6V7H1.4z" fill="#e8e8e8"/><circle cx="2.4" cy="2.4" r="2" fill="#f0a732"/><rect x="4.4" y="4.4" width="3.2" height="3.2" fill="#4a9fd8"/></svg>
<div class="t" style="left:252.3px;top:512.4px;font-size:6.6px;color:#bbbbbb;">TODO</div>
<svg class="a" style="left:712.60px;top:512.60px" width="9" height="9" viewBox="0 0 9 9"><circle cx="4.5" cy="4.2" r="3.9" fill="#62cf7e"/><path d="M6.4 6.8l2 1.8-3.2-.6z" fill="#62cf7e"/></svg>
<div class="t" style="left:715.6px;top:511.8px;font-size:5.2px;color:#1e3d26;font-weight:bold">2</div>
<div class="t" style="left:723.8px;top:512.4px;font-size:6.35px;color:#bbbbbb;">Event Log</div>
<svg class="a" style="left:766.50px;top:513.40px" width="7" height="7" viewBox="0 0 7 7"><rect x=".3" y=".3" width="6.4" height="6.4" fill="#4a88b8" stroke="#8fb8d8" stroke-width=".6"/><rect x="2" y="2" width="3" height="3" fill="#9cc4e0"/></svg>
<div class="t" style="left:775.2px;top:512.4px;font-size:6.45px;color:#bbbbbb;">Gradle Console</div>
<svg class="a" style="left:3.80px;top:526.10px" width="9" height="8.4" viewBox="0 0 9 8.4"><rect x=".4" y=".4" width="8.2" height="6.8" fill="#6e7173" stroke="#8a8d8f" stroke-width=".7"/><rect x="0" y="7.2" width="9" height="1.2" fill="#2f2f2f"/></svg>
<svg class="a" style="left:15.70px;top:526.80px" width="7" height="7" viewBox="0 0 7 7"><path d="M5.9 2A3 3 0 0 0 1 2.6M1.1 5A3 3 0 0 0 6 4.4" fill="none" stroke="#8a8d8f" stroke-width=".8"/></svg>
<div class="t" style="left:27.2px;top:525.7px;font-size:6.99px;color:#bbbbbb;">Gradle build finished in 1m 1s 139ms (a minute ago)</div>
<div class="t" style="left:657.5px;top:525.7px;font-size:6.8px;color:#bbbbbb;">18:31</div>
<div class="t" style="left:680px;top:525.7px;font-size:6.3px;color:#bbbbbb;">CRLF</div>
<svg class="a" style="left:696.40px;top:528.10px" width="3" height="5" viewBox="0 0 3 5"><path d="M0 2L1.5 0 3 2zM0 3l1.5 2L3 3z" fill="#bbbbbb"/></svg>
<div class="t" style="left:704.8px;top:525.7px;font-size:6.6px;color:#bbbbbb;">UTF-8</div>
<svg class="a" style="left:723.70px;top:528.10px" width="3" height="5" viewBox="0 0 3 5"><path d="M0 2L1.5 0 3 2zM0 3l1.5 2L3 3z" fill="#bbbbbb"/></svg>
<div class="t" style="left:731.4px;top:525.7px;font-size:7.0px;color:#777a7c;">Context: &lt;no context&gt;</div>
<svg class="a" style="left:814.70px;top:527.60px" width="6" height="6" viewBox="0 0 6 6"><rect x="1.6" y="2.6" width="3.8" height="3" fill="#c8c8c8"/><path d="M1 2.8V1.8a1.2 1.2 0 0 1 2.4 0v.8" fill="none" stroke="#c8c8c8" stroke-width=".7"/></svg>
<svg class="a" style="left:828.90px;top:526.40px" width="7" height="8" viewBox="0 0 7 8"><path d="M1 2a2.5 2.5 0 0 1 5 0v3.4a2.5 2.5 0 0 1-5 0z" fill="none" stroke="#8a8d8f" stroke-width=".7"/><path d="M.4 3h6.2M2.4 5.6h2.2" stroke="#8a8d8f" stroke-width=".6"/></svg>
<div class="a" style="left:0px;top:536.1px;width:27.5px;height:0.9px;background:#1e1e1e;"></div>
<div class="a" style="left:27.5px;top:536.1px;width:201px;height:0.9px;background:#48494b;"></div>
<div class="a" style="left:228.5px;top:536.1px;width:611.5px;height:0.9px;background:#18181d;"></div>
<div class="a" style="left:515px;top:37.5px;width:240px;height:443.5px;background:#808080;border:1px solid #41709f"></div>
<div class="a" style="left:516px;top:38.2px;width:238px;height:17px;background:#fff;"></div>
<div class="t" style="left:520.3px;top:41.6px;font-size:6.75px;color:#000;">Android Emulator - Nexus_5X_API_25:5554</div>
<div class="a" style="left:533.3px;top:57.1px;width:204.5px;height:415.7px;background:linear-gradient(to right,rgba(255,255,255,.02),rgba(0,0,0,0) 35%,rgba(0,0,0,.16) 100%),linear-gradient(#323232 0%,#2e2e2e 15%,#2a2a2a 50%,#222 85%,#202020 100%);border-radius:24px 24px 24px 24px / 28px 28px 30px 30px;box-shadow:inset 1.3px 1.3px 1.2px -.3px #9a9a9a, inset -.8px .5px 1px #151515, inset 0 0 0 .6px #3a3a3a"></div>
<div class="a" style="left:737px;top:164px;width:1.3px;height:27px;background:#555;"></div>
<div class="a" style="left:737px;top:220px;width:1.3px;height:50px;background:#555;"></div>
<div class="a" style="left:597.8px;top:69px;width:74px;height:7px;background:#151515;border-radius:3.5px"></div>
<div class="a" style="left:570px;top:71.6px;width:3px;height:3px;background:#1a1a2a;border-radius:50%"></div>
<div class="a" style="left:597.6px;top:453.4px;width:74.6px;height:6.2px;background:#191919;border-radius:3.1px"></div>
<div class="a" style="left:736.2px;top:100px;width:1.4px;height:345px;background:linear-gradient(transparent,#363636 8%,#363636 92%,transparent);"></div>
<div class="a" style="left:541.2px;top:95.7px;width:187.6px;height:333.8px;background:#fafafa;"></div>
<div class="a" style="left:541.2px;top:95.7px;width:187.6px;height:10.3px;background:#303f9f;"></div>
<div class="a" style="left:541.2px;top:106px;width:187.6px;height:25.5px;background:#3f51b5;box-shadow:0 1px 1.5px rgba(0,0,0,.25)"></div>
<div class="t" style="left:547.9px;top:113.6px;font-size:9.5px;color:#fff;line-height:12px;height:12px;-webkit-text-stroke:.45px #fff">My Application</div>
<svg class="a" style="left:546.30px;top:97.44px" width="5.60" height="6.72" viewBox="0 0 5 6"><path d="M1.4 0H5V6H0V1.4z" fill="#fff"/></svg>
<svg class="a" style="left:693.30px;top:97.60px" width="7" height="6" viewBox="0 0 7 6"><path d="M7 0V6H1z" fill="#fff"/><path d="M5 2.4V6H1.4z" fill="#8c96cf"/><path d="M0 .2h2.6v2.2H0z" fill="#c5cae9"/></svg>
<svg class="a" style="left:704.70px;top:97.40px" width="4.4" height="6.4" viewBox="0 0 4.4 6.4"><path d="M1.2 0h2v.7h1.2v5.7H0V.7h1.2z" fill="#fff"/><path d="M2.4 1.6L1.2 3.6h.9v1.6l1.2-2h-.9z" fill="#303f9f"/></svg>
<div class="t" style="left:711.9px;top:95.9px;font-size:6.85px;color:#fff;-webkit-text-stroke:.25px #fff">9:26</div>
<div class="t" style="left:622.9px;top:265.2px;font-size:6.5px;color:#7c7c7c;">Bonjour!</div>
<div class="a" style="left:541.2px;top:407.4px;width:187.6px;height:22.2px;background:#000;"></div>
<svg class="a" style="left:578.10px;top:414.50px" width="7" height="8" viewBox="0 0 7 8"><path d="M6.6.4v7.2L.4 4z" fill="#fff"/></svg>
<div class="a" style="left:630.8px;top:414.8px;width:7.4px;height:7.4px;background:#fff;border-radius:50%"></div>
<div class="a" style="left:684.2px;top:415.2px;width:6.6px;height:6.6px;background:#fff;"></div>
<div class="a" style="left:762.2px;top:55.4px;width:34.4px;height:299.6px;background:#ececec;"></div>
<div class="a" style="left:770.4px;top:63px;width:4px;height:0.8px;background:#546e7a;"></div>
<svg class="a" style="left:783.30px;top:60.90px" width="5" height="5" viewBox="0 0 5 5"><path d="M.5.5l4 4M4.5.5l-4 4" stroke="#546e7a" stroke-width=".9"/></svg>
<svg class="a" style="left:772.90px;top:75.90px" width="12" height="12" viewBox="0 0 12 12"><path d="M3.6 2.9A4.4 4.4 0 1 0 8.4 2.9" fill="none" stroke="#546e7a" stroke-width="1.3"/><path d="M6 .8V6" stroke="#546e7a" stroke-width="1.3"/></svg>
<svg class="a" style="left:772.90px;top:101.20px" width="12" height="12" viewBox="0 0 12 12"><path d="M1 4.3h2.2L6.2 1.4v9.2L3.2 7.7H1z" fill="#546e7a"/><path d="M7.4 3.8a2.6 2.6 0 0 1 0 4.4z" fill="#546e7a"/><path d="M7.4 1.2a5 5 0 0 1 0 9.6" fill="none" stroke="#546e7a" stroke-width="1.1"/></svg>
<svg class="a" style="left:772.90px;top:127.10px" width="12" height="12" viewBox="0 0 12 12"><path d="M2.4 4.3h2.2l3-2.9v9.2l-3-2.9H2.4z" fill="#546e7a"/><path d="M8.8 3.8a2.6 2.6 0 0 1 0 4.4z" fill="#546e7a"/></svg>
<svg class="a" style="left:771.90px;top:151.20px" width="14" height="14" viewBox="0 0 14 14"><rect x="3.6" y="3.2" width="6.8" height="8.4" rx=".6" transform="rotate(-45 7 7.4)" fill="none" stroke="#546e7a" stroke-width="1.2"/><path d="M8.2 1.2a5.6 5.6 0 0 1 4.6 4.6" fill="none" stroke="#546e7a" stroke-width="1"/></svg>
<svg class="a" style="left:771.90px;top:177.10px" width="14" height="14" viewBox="0 0 14 14"><rect x="3.6" y="3.2" width="6.8" height="8.4" rx=".6" transform="rotate(45 7 7.4)" fill="none" stroke="#546e7a" stroke-width="1.2"/><path d="M5.8 1.2a5.6 5.6 0 0 0-4.6 4.6" fill="none" stroke="#546e7a" stroke-width="1"/></svg>
<svg class="a" style="left:772.90px;top:204.30px" width="12" height="11" viewBox="0 0 12 11"><path d="M4.2.8h3.6l.9 1.3h1.7a.8.8 0 0 1 .8.8v6.4a.8.8 0 0 1-.8.8H1.6a.8.8 0 0 1-.8-.8V2.9a.8.8 0 0 1 .8-.8h1.7z" fill="#546e7a"/><circle cx="6" cy="6" r="2.3" fill="none" stroke="#ececec" stroke-width="1"/></svg>
<svg class="a" style="left:772.90px;top:229.80px" width="12" height="12" viewBox="0 0 12 12"><circle cx="4.8" cy="4.8" r="3.3" fill="none" stroke="#546e7a" stroke-width="1.3"/><path d="M7.2 7.2l3.6 3.6" stroke="#546e7a" stroke-width="1.5"/><path d="M3.2 4.8h3.2M4.8 3.2v3.2" stroke="#546e7a" stroke-width=".9"/></svg>
<svg class="a" style="left:772.90px;top:255.70px" width="12" height="12" viewBox="0 0 12 12"><path d="M9 1.8v8.4L2.4 6z" fill="none" stroke="#546e7a" stroke-width="1.1" stroke-linejoin="round"/></svg>
<svg class="a" style="left:772.90px;top:281.30px" width="12" height="12" viewBox="0 0 12 12"><circle cx="6" cy="6" r="3.9" fill="none" stroke="#546e7a" stroke-width="1.1"/></svg>
<svg class="a" style="left:772.90px;top:306.60px" width="12" height="12" viewBox="0 0 12 12"><rect x="2.2" y="2.2" width="7.6" height="7.6" rx=".5" fill="none" stroke="#546e7a" stroke-width="1.1"/></svg>
<svg class="a" style="left:772.90px;top:336.60px" width="12" height="4" viewBox="0 0 12 4"><circle cx="2.4" cy="2" r="1" fill="#546e7a"/><circle cx="6" cy="2" r="1" fill="#546e7a"/><circle cx="9.6" cy="2" r="1" fill="#546e7a"/></svg>
</body></html>
